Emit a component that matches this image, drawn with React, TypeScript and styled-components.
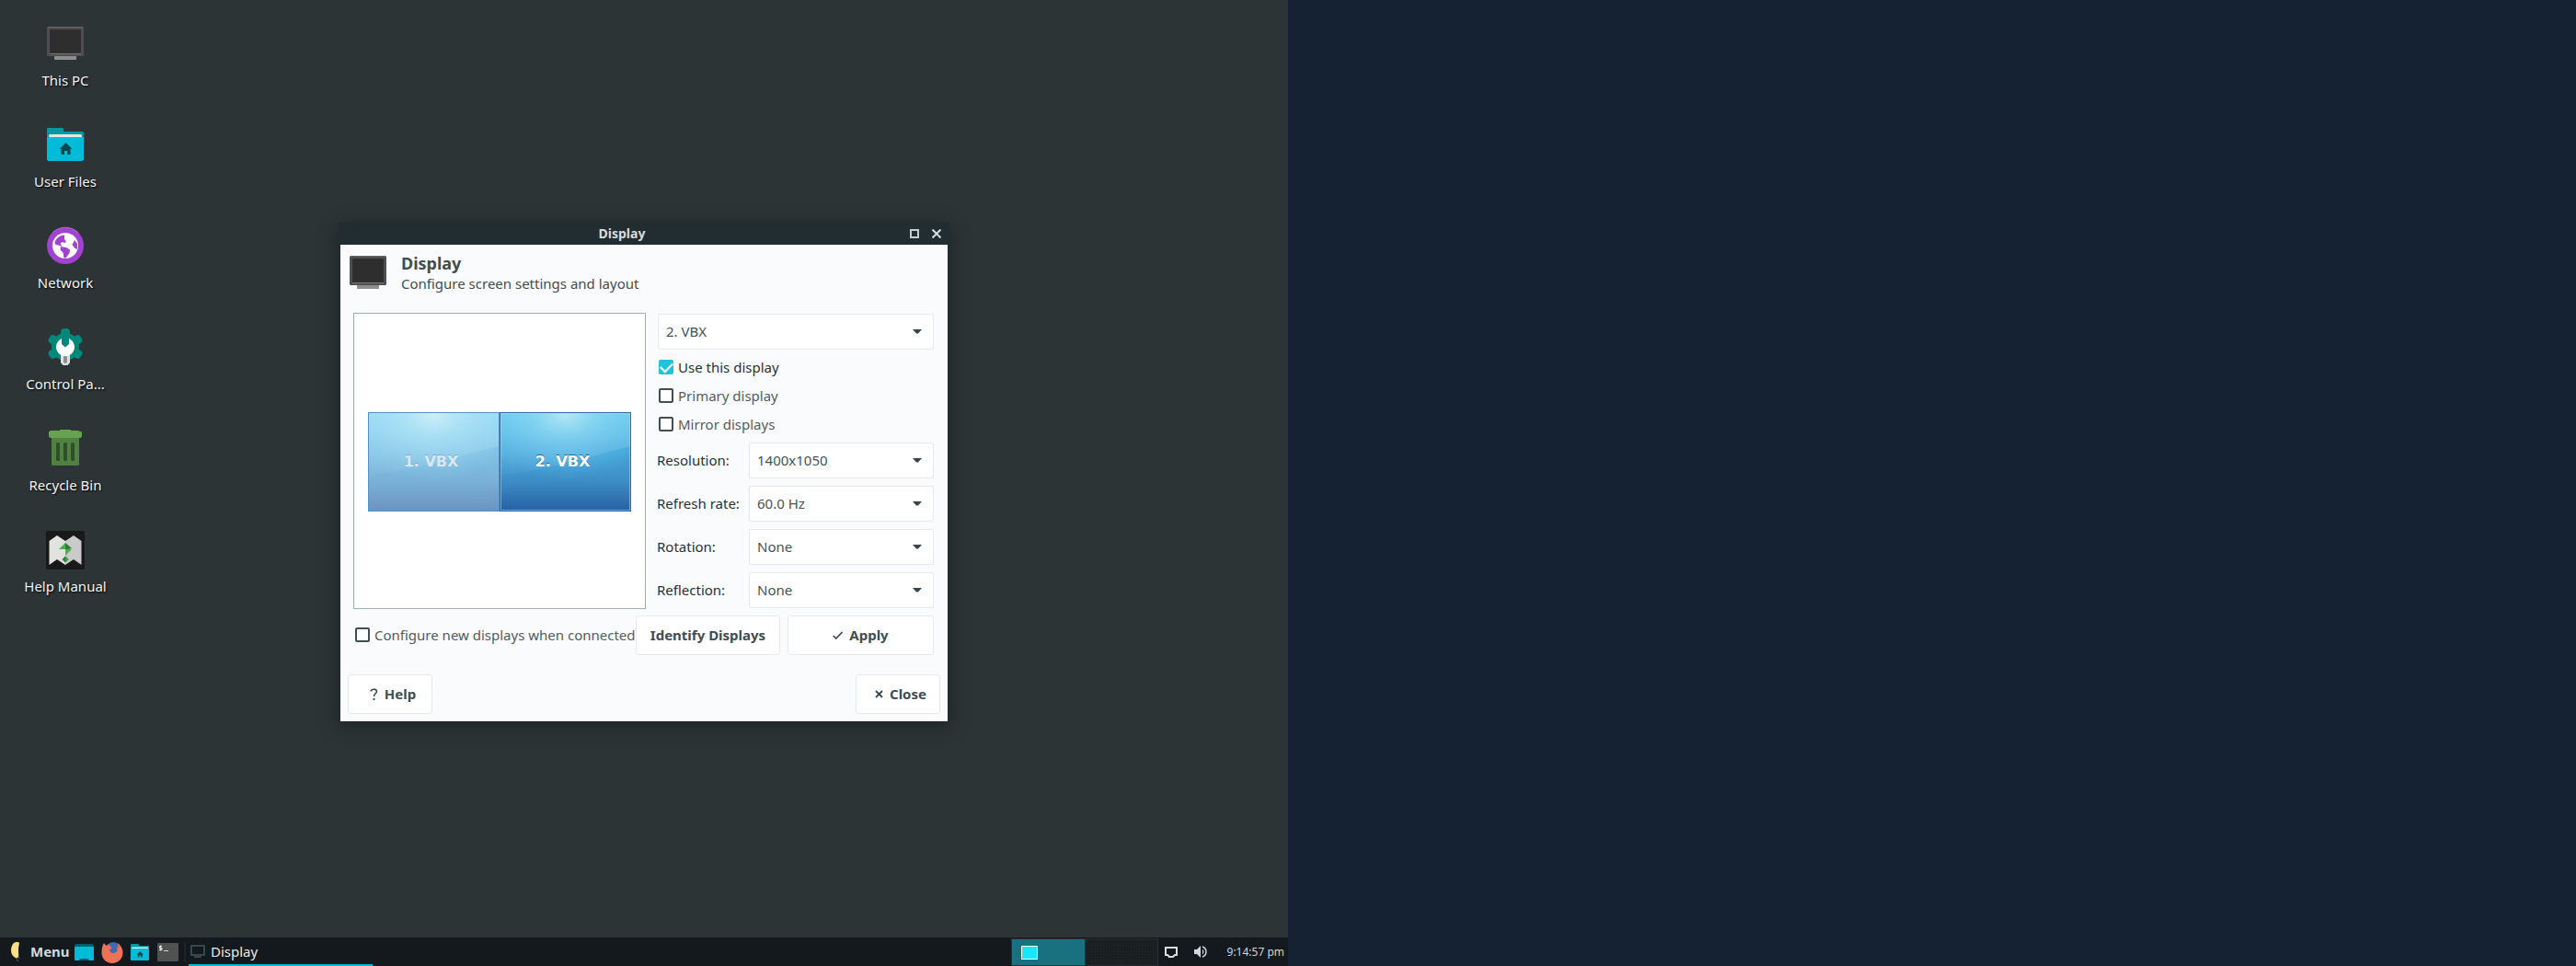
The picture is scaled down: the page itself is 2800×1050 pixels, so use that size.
import React from "react";
import styled, { createGlobalStyle } from "styled-components";

const Global = createGlobalStyle`
  * { box-sizing: border-box; }
  body { margin: 0; background: #152233; }
  body, button, select, input { font-family: "Noto Sans", "Open Sans", sans-serif; font-size: 15px; line-height: 20px; }
`;

const Screens = styled.div`
  display: grid;
  grid-template-columns: 1fr 1fr;
  min-height: 100vh;
`;

const Primary = styled.main`
  position: relative;
  display: flex;
  flex-direction: column;
  justify-content: space-between;
  background: #2d3436;
`;

const Secondary = styled.div`
  background: #152233;
`;

/* Desktop shortcuts */

const Shortcuts = styled.nav`
  display: flex;
  flex-direction: column;
  align-items: flex-start;
  padding: 23px 0 0 16px;
`;

const Shortcut = styled.a`
  display: flex;
  flex-direction: column;
  align-items: center;
  gap: 6px;
  width: 110px;
  height: 110px;
  color: #f1f4f4;
  text-decoration: none;
  text-shadow: 1px 1px 2px #000000;
`;

/* Dialog window */

const DialogWindow = styled.section`
  position: absolute;
  left: 368px;
  top: 242px;
  width: 664px;
  border: 0 solid #222d32;
  border-width: 0 2px;
  background: #fafbfd;
  background-clip: padding-box;
  box-shadow: 0 4px 16px rgba(10, 18, 20, 0.55);
`;

const TitleBar = styled.header`
  display: flex;
  align-items: center;
  height: 24px;
  background: #222d32;
`;

const WindowTitle = styled.h1`
  flex: 1;
  margin: 0;
  color: #d5dcdf;
  font-size: 14px;
  line-height: 24px;
  font-weight: 700;
  text-align: center;
`;

const TitleButton = styled.button`
  display: flex;
  align-items: center;
  justify-content: center;
  width: 24px;
  height: 24px;
  padding: 0;
  border: 0;
  background: none;
`;

const Heading = styled.div`
  display: flex;
  align-items: center;
  gap: 12px;
  padding: 6px;
  color: #414d52;
`;

const HeadingText = styled.div`
  display: flex;
  flex-direction: column;
`;

const HeadingTitle = styled.h2`
  margin: 0;
  font-size: 18px;
  line-height: 24px;
  font-weight: 700;
`;

const Body = styled.div`
  display: grid;
  grid-template-columns: 318px 1fr;
  gap: 12px;
  padding: 14px 14px 6px;
`;

const Canvas = styled.div`
  display: flex;
  align-items: center;
  justify-content: center;
  padding-top: 2px;
  border: 1px solid #9badb9;
  background: #ffffff;
`;

const Monitor = styled.button<{ $active: boolean }>`
  display: grid;
  width: 143px;
  height: 108px;
  padding: 0;
  border: 1px solid ${(p) => (p.$active ? "#2d69a8" : "#5591c4")};
  background: #ffffff;
  overflow: hidden;
  > * { grid-area: 1 / 1; }
`;

const MonitorArt = styled.svg<{ $active: boolean }>`
  width: 100%;
  height: 100%;
  opacity: ${(p) => (p.$active ? 1 : 0.68)};
`;

const MonitorName = styled.span<{ $active: boolean }>`
  z-index: 1;
  align-self: center;
  padding-right: 6px;
  color: ${(p) => (p.$active ? "#ffffff" : "#d8e9f3")};
  font: 700 16px/20px "DejaVu Sans", sans-serif;
  text-align: center;
  text-shadow: 0 -1px 0 ${(p) => (p.$active ? "#25618f" : "#7fa9c4")};
`;

const Settings = styled.div`
  display: flex;
  flex-direction: column;
  gap: 4px;
  padding: 1px;
`;

const Ticks = styled.div`
  display: flex;
  flex-direction: column;
  gap: 1px;
  padding-bottom: 1px;
`;

const Fields = styled.div`
  display: flex;
  flex-direction: column;
  gap: 8px;
`;

const Field = styled.div`
  display: grid;
  grid-template-columns: 100px 1fr;
  align-items: center;
  margin-left: -1px;
  color: #263238;
  > label { padding-bottom: 1px; }
`;

const ComboFrame = styled.div`
  display: grid;
  align-items: center;
  > * { grid-area: 1 / 1; }
`;

const Combo = styled.select`
  appearance: none;
  width: 100%;
  height: 39px;
  padding: 0 32px 1px 8px;
  border: 1px solid #e6e9eb;
  border-radius: 2px;
  background: #ffffff;
  color: #455257;
`;

const Caret = styled.svg`
  justify-self: end;
  margin-right: 13px;
  pointer-events: none;
`;

const Tick = styled.label<{ $strong?: boolean }>`
  display: flex;
  align-items: center;
  gap: 5px;
  height: 30px;
  padding-left: 1px;
  color: ${(p) => (p.$strong ? "#263238" : "#515d62")};
  white-space: nowrap;
`;

const TickBox = styled.input`
  appearance: none;
  flex: none;
  width: 16px;
  height: 16px;
  margin: 0;
  border: 2px solid #414d52;
  border-radius: 2px;
  background: #ffffff;
  &:checked {
    border: 0;
    background: #20c3de;
  }
  &:checked::before {
    content: "";
    display: block;
    width: 11px;
    height: 6px;
    margin: 3px 0 0 2px;
    border: solid #ffffff;
    border-width: 0 0 2px 2px;
    transform: rotate(-45deg);
  }
`;

const Actions = styled.div`
  display: grid;
  grid-template-columns: minmax(0, 1fr) 157px 159px;
  align-items: start;
  gap: 8px;
  padding: 1px 15px;
  ${Tick} { height: 42px; }
`;

const PushButton = styled.button`
  display: flex;
  align-items: center;
  justify-content: center;
  gap: 7px;
  height: 43px;
  padding: 0 0 1px;
  border: 1px solid #e6e9eb;
  border-radius: 3px;
  background: #ffffff;
  color: #414d52;
  font-weight: 700;
  white-space: nowrap;
`;

const Footer = styled.footer`
  display: flex;
  justify-content: space-between;
  padding: 20px 8px 8px;
  ${PushButton} { width: 92px; padding-left: 6px; }
`;

/* Panel */

const Panel = styled.footer`
  display: flex;
  align-items: stretch;
  height: 31px;
  padding: 0 4px;
  background: #14191d;
  color: #dfe5e7;
`;

const MenuButton = styled.button`
  display: flex;
  align-items: center;
  gap: 5px;
  width: 73px;
  padding: 0 0 1px;
  border: 0;
  background: none;
  color: #d3dadd;
  font-weight: 700;
`;

const PanelButton = styled.button<{ $width: number }>`
  display: flex;
  align-items: center;
  justify-content: center;
  width: ${(p) => p.$width}px;
  padding: 0;
  border: 0;
  background: none;
`;

const Divider = styled.span`
  width: 2px;
  margin: 5px 3px;
  background: #1d2327;
`;

const Task = styled.button`
  display: flex;
  align-items: center;
  gap: 6px;
  width: 200px;
  padding: 1px 2px 0;
  border: 0;
  border-bottom: 2px solid #00bcd4;
  background: none;
  color: #e6ebed;
`;

const Pager = styled.div`
  display: grid;
  grid-template-columns: 1fr 1fr;
  gap: 1px;
  width: 160px;
  margin: 1px 0 0 auto;
  padding: 1px;
  background: #263035;
`;

const Workspace = styled.button<{ $active?: boolean }>`
  padding: 0 10px;
  border: 0;
  background: ${(p) => (p.$active ? "#19707f" : "radial-gradient(#22292c 1px, #191e21 1px) 0 0 / 3px 3px")};
`;

const MiniWindow = styled.span`
  display: block;
  width: 18px;
  height: 15px;
  border: 1px solid #ffffff;
  background: #18e8ff;
`;

const Clock = styled.time`
  align-self: center;
  width: 72px;
  text-align: right;
  color: #cfd6d9;
  font-size: 12px;
  white-space: nowrap;
`;

const ComputerIcon = () => (
  <svg width="48" height="48" viewBox="0 0 48 48" aria-hidden="true">
    <rect x="12" y="37" width="24" height="5" rx="1" fill="#8e8e8e" />
    <rect x="12" y="37" width="24" height="1" fill="#6b6b6b" />
    <rect x="4" y="6" width="40" height="32" rx="1.5" fill="#4f4f4f" />
    <rect x="5" y="6" width="38" height="1" fill="#686868" />
    <rect x="7" y="9" width="34" height="26" fill="#2e2e2e" />
    <rect x="7" y="35" width="34" height="1" fill="#777" />
  </svg>
);

const FolderIcon = ({ size = 48 }: { size?: number }) => (
  <svg width={size} height={size} viewBox="0 0 48 48" aria-hidden="true">
    <path d="M5 6h16l1 1v3h21l1 1v28H4V7z" fill="#0097a7" />
    <path d="M6 18v-4l1-1h34l1 1v4z" fill="#e4e4e4" />
    <path d="M4 16h40v24.500l-1.500 1.500h-37L4 40.500z" fill="#00bcd9" />
    <path d="M24.500 22l7 7h-2v6h-3.500v-4h-3v4h-3.500v-6h-2z" fill="#00474f" />
  </svg>
);

const NetworkIcon = () => (
  <svg width="48" height="48" viewBox="0 0 48 48" aria-hidden="true">
    <circle cx="24" cy="24" r="20" fill="#a142d0" />
    <path d="M10 10a20 20 0 0 1 28 0" fill="none" stroke="#b468db" strokeWidth="1" />
    <circle cx="24" cy="24" r="14" fill="#fff" />
    <path d="M23 12.500c-4.500 0-9 3.500-10.500 8l1 2.500c2 .5 3.500 0 5.500 1.500l1.500 0-2-3 2-1.500 2.500 1 2-1-2-3zM19 25l6 1 4 2.500-.5 3.500-4 5.500h-2l-1-6-3-3zM34 18l3 4v6l-3-1.500-2.500-3.500z" fill="#a142d0" />
  </svg>
);

const ControlIcon = () => (
  <svg width="48" height="48" viewBox="0 0 48 48" aria-hidden="true">
    <g fill="#00897b">
      <circle cx="24" cy="24" r="15" />
      {[0, 60, 120, 180, 240, 300].map((a) => (
        <rect key={a} x="19" y="4" width="10" height="14" rx="4" transform={`rotate(${a} 24 24)`} />
      ))}
    </g>
    <path d="M19 32h10v9l-2.500 3h-5L19 41z" fill="#e0e0e0" />
    <rect x="22" y="33" width="4" height="9" rx="2" fill="#8c8f92" />
    <path d="M20 15v6l4 3.500 4-3.500v-6a10 10 0 1 1-8 0z" fill="#fff" />
  </svg>
);

const BinIcon = () => (
  <svg width="48" height="48" viewBox="0 0 48 48" aria-hidden="true">
    <path d="M9 12h30v30l-1 1H10l-1-1z" fill="#518043" />
    <path d="M18 5V4h12v1h7.500l4.500 1.500v5L40.500 13h-33L6 11.500v-5L7.500 5z" fill="#66a250" />
    <g fill="#2e4f28">
      <rect x="14" y="18" width="4" height="20" rx="1.500" />
      <rect x="22" y="18" width="4" height="20" rx="1.500" />
      <rect x="30" y="18" width="4" height="20" rx="1.500" />
    </g>
  </svg>
);

const ManualIcon = () => (
  <svg width="48" height="48" viewBox="0 0 48 48" aria-hidden="true">
    <rect x="3" y="4" width="42" height="42" rx="1.500" fill="#191919" />
    <path d="M6.500 15L15 9l9 6v26l-9-6-8.500 6z" fill="#e2e2df" />
    <path d="M41.500 15L33 9l-9 6v26l9-6 8.500 6z" fill="#cacaca" />
    <path d="M24 17l-7 7h7z" fill="#4caf50" />
    <path d="M24 17l7 6-3.500 1H24z" fill="#2e7d32" />
    <path d="M24 24h7l-7 7z" fill="#4caf50" />
    <path d="M24 31.500L20.500 35l3.500 3.500 3.500-3.500z" fill="#2e7d32" />
    <path d="M24 31.500l3.500 3.500-3.500 3.500z" fill="#43a047" />
  </svg>
);

const shortcuts: [string, React.ReactNode][] = [
  ["This PC", <ComputerIcon />],
  ["User Files", <FolderIcon />],
  ["Network", <NetworkIcon />],
  ["Control Pa...", <ControlIcon />],
  ["Recycle Bin", <BinIcon />],
  ["Help Manual", <ManualIcon />],
];

const fields = [
  { id: "resolution", label: "Resolution:", value: "1400x1050" },
  { id: "refresh", label: "Refresh rate:", value: "60.0 Hz" },
  { id: "rotation", label: "Rotation:", value: "None" },
  { id: "reflection", label: "Reflection:", value: "None" },
];

function ComboBox({ id, value, label }: { id: string; value: string; label?: string }) {
  return (
    <ComboFrame>
      <Combo id={id} aria-label={label} defaultValue={value}>
        <option>{value}</option>
      </Combo>
      <Caret width="10" height="5" viewBox="0 0 10 5" aria-hidden="true">
        <path d="M0 0h10L6 4.500H4z" fill="#37474f" />
      </Caret>
    </ComboFrame>
  );
}

function MonitorTile({ name, active }: { name: string; active: boolean }) {
  const id = active ? "on" : "off";
  return (
    <Monitor $active={active}>
      <MonitorArt $active={active} viewBox="0 0 141 106" preserveAspectRatio="none" aria-hidden="true">
        <defs>
          <linearGradient id={`base-${id}`} x1="0" y1="0" x2="0" y2="1">
            <stop offset="0" stopColor="#53bdeb" />
            <stop offset="0.4" stopColor="#45a5da" />
            <stop offset="0.7" stopColor="#3c8dc5" />
            <stop offset="1" stopColor="#2761a3" />
          </linearGradient>
          <radialGradient id={`glow-${id}`} cx="0.5" cy="0" r="0.7">
            <stop offset="0" stopColor="#c0ebf6" stopOpacity="0.9" />
            <stop offset="0.35" stopColor="#8fdaf3" stopOpacity="0.6" />
            <stop offset="1" stopColor="#5cc4ee" stopOpacity="0" />
          </radialGradient>
          <linearGradient id={`gloss-${id}`} x1="0" y1="0" x2="0" y2="1">
            <stop offset="0" stopColor="#86dcf6" stopOpacity="0.6" />
            <stop offset="1" stopColor="#9bcbea" stopOpacity="0.06" />
          </linearGradient>
        </defs>
        <rect width="141" height="106" fill={`url(#base-${id})`} />
        <path d="M0 0h141v36C100 46 60 60 0 68z" fill={`url(#gloss-${id})`} />
        <rect width="141" height="106" fill={`url(#glow-${id})`} />
        {active && <rect x="0.5" y="0.5" width="140" height="105" fill="none" stroke="#b5def2" strokeOpacity="0.5" />}
      </MonitorArt>
      <MonitorName $active={active}>{name}</MonitorName>
    </Monitor>
  );
}

export default function App() {
  return (
    <>
      <Global />
      <Screens>
        <Primary>
          <Shortcuts>
            {shortcuts.map(([name, icon]) => (
              <Shortcut key={name} href="#">
                {icon}
                <span>{name}</span>
              </Shortcut>
            ))}
          </Shortcuts>

          <DialogWindow>
            <TitleBar>
              <WindowTitle>Display</WindowTitle>
              <TitleButton aria-label="Maximize">
                <svg width="10" height="10" viewBox="0 0 10 10">
                  <rect x="1" y="1" width="8" height="8" fill="none" stroke="#c3ced3" strokeWidth="2" />
                </svg>
              </TitleButton>
              <TitleButton aria-label="Close window">
                <svg width="10" height="10" viewBox="0 0 10 10">
                  <path d="M.5.5l9 9M9.500.5l-9 9" stroke="#d3dce0" strokeWidth="2" />
                </svg>
              </TitleButton>
            </TitleBar>
            <Heading>
              <ComputerIcon />
              <HeadingText>
                <HeadingTitle>Display</HeadingTitle>
                <span>Configure screen settings and layout</span>
              </HeadingText>
            </Heading>
            <Body>
              <Canvas>
                <MonitorTile name="1. VBX" active={false} />
                <MonitorTile name="2. VBX" active />
              </Canvas>
              <Settings>
                <ComboBox id="output" label="Output" value="2. VBX" />
                <Ticks>
                  <Tick $strong>
                    <TickBox type="checkbox" defaultChecked />
                    Use this display
                  </Tick>
                  <Tick>
                    <TickBox type="checkbox" />
                    Primary display
                  </Tick>
                  <Tick>
                    <TickBox type="checkbox" />
                    Mirror displays
                  </Tick>
                </Ticks>
                <Fields>
                  {fields.map((f) => (
                    <Field key={f.id}>
                      <label htmlFor={f.id}>{f.label}</label>
                      <ComboBox id={f.id} value={f.value} />
                    </Field>
                  ))}
                </Fields>
              </Settings>
            </Body>
            <Actions>
              <Tick>
                <TickBox type="checkbox" />
                Configure new displays when connected
              </Tick>
              <PushButton>Identify Displays</PushButton>
              <PushButton>
                <svg width="11" height="9" viewBox="0 0 11 9" aria-hidden="true">
                  <path d="M.7 5l3 3L10.500 1" fill="none" stroke="#37474f" strokeWidth="1.600" />
                </svg>
                Apply
              </PushButton>
            </Actions>
            <Footer>
              <PushButton>
                <svg width="9" height="13" viewBox="0 0 9 13" aria-hidden="true">
                  <path d="M1 3.500C1.500.5 7.500.3 7.500 3.500 7.500 5.800 4.500 5.800 4.500 9" fill="none" stroke="#414d52" strokeWidth="1.600" />
                  <rect x="3.500" y="11" width="2" height="2" fill="#414d52" />
                </svg>
                Help
              </PushButton>
              <PushButton>
                <svg width="9" height="9" viewBox="0 0 9 9" aria-hidden="true">
                  <path d="M1 1l7 7M8 1L1 8" stroke="#37474f" strokeWidth="1.800" />
                </svg>
                Close
              </PushButton>
            </Footer>
          </DialogWindow>

          <Panel>
            <MenuButton>
              <svg width="24" height="24" viewBox="0 0 24 24" aria-hidden="true">
                <path d="M10.500 3.500C12 1.500 16.500 1.500 17 3 16.500 5.500 16 8 16 11c0 3 .5 5.500 0 7.500l-2.500 1C10 18 8 15 8 11c0-3 1-5.500 2.500-7.500z" fill="#ffdf85" />
                <path d="M13.500 19l2 4M16 18l1 2" stroke="#5c6468" strokeWidth="1" />
              </svg>
              Menu
            </MenuButton>
            <PanelButton $width={30} aria-label="Show desktop">
              <svg width="24" height="24" viewBox="0 0 24 24">
                <path d="M1 4.500L2.500 3h18L22 4.500V8H1z" fill="#00606c" />
                <rect x="1" y="6" width="21" height="15" rx="1" fill="#00bcd9" />
                <path d="M7 19h9l1 2H6z" fill="#00606c" />
              </svg>
            </PanelButton>
            <PanelButton $width={30} aria-label="Web browser">
              <svg width="24" height="24" viewBox="0 0 24 24">
                <circle cx="13" cy="10" r="9" fill="#3f68b5" />
                <path d="M3 2l2.500 3 3-1.500L10 6l2 1-3 2.500 1 2c1 2 4 1.500 6 .5 2-1.500 2-4 .5-6l2.500 1L17.500 2C21 4 23.500 8 23.500 12.500 23.500 19 18.500 24 12 24S.5 19 .5 12.500C.5 8 1.500 4 3 2z" fill="#ee7354" />
              </svg>
            </PanelButton>
            <PanelButton $width={30} aria-label="Files">
              <FolderIcon size={24} />
            </PanelButton>
            <PanelButton $width={30} aria-label="Terminal">
              <svg width="24" height="24" viewBox="0 0 24 24">
                <rect x="1" y="2" width="23" height="20" rx="1" fill="#515151" />
                <path d="M6 5.500H3.500v2H6v2H3M4.700 4.500v6" fill="none" stroke="#e8e8e8" strokeWidth="1" />
                <rect x="8" y="10" width="5" height="1" fill="#d8d8d8" />
              </svg>
            </PanelButton>
            <Divider />
            <Task>
              <svg width="16" height="16" viewBox="0 0 16 16" aria-hidden="true">
                <path d="M1 2h14v10H1z" fill="#14191d" stroke="#37474b" strokeWidth="2" />
                <path d="M4 13h8v2H4z" fill="#37474b" />
              </svg>
              Display
            </Task>
            <Pager>
              <Workspace $active aria-label="Workspace 1">
                <MiniWindow />
              </Workspace>
              <Workspace aria-label="Workspace 2" />
            </Pager>
            <PanelButton $width={28} aria-label="Display settings">
              <svg width="14" height="12" viewBox="0 0 14 12">
                <path d="M1 1h12v8h-2l-2 2H5L3 9H1z" fill="none" stroke="#d5dfe2" strokeWidth="2" />
              </svg>
            </PanelButton>
            <PanelButton $width={37} aria-label="Volume">
              <svg width="15" height="13" viewBox="0 0 15 13">
                <path d="M0 4h3l4-4v13L3 9H0z" fill="#cfd8dc" />
                <path d="M9 3.500a4 4 0 0 1 0 6z" fill="#cfd8dc" />
                <path d="M9 1a5.800 5.800 0 0 1 0 11" fill="none" stroke="#cfd8dc" strokeWidth="1.500" />
              </svg>
            </PanelButton>
            <Clock>9:14:57 pm</Clock>
          </Panel>
        </Primary>
        <Secondary />
      </Screens>
    </>
  );
}
